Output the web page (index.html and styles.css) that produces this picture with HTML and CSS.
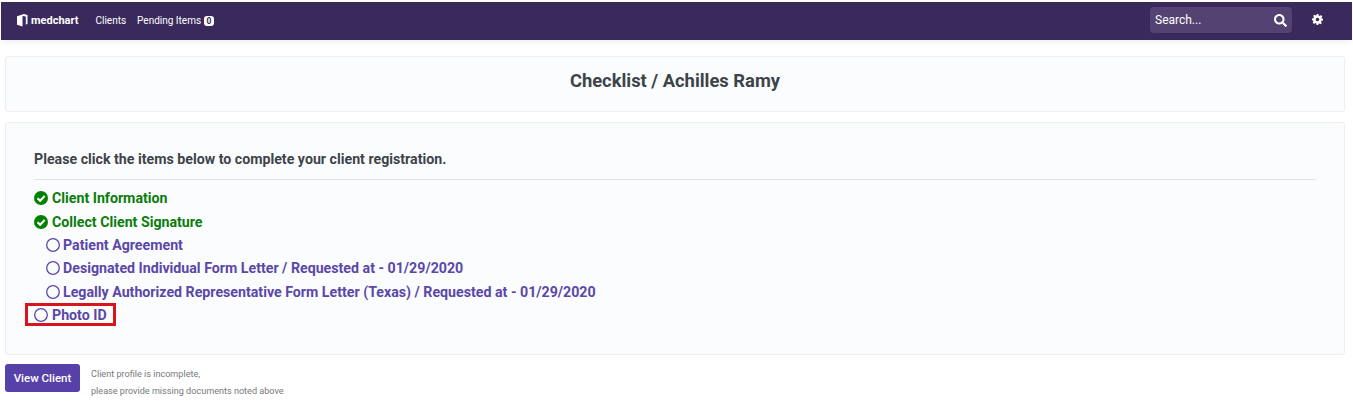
FILE: index.html
```html
<!DOCTYPE html>
<html>
  <head>
    <link rel="stylesheet" href="styles.css">
  </head>
  <body>
    <nav class="navbar">
      <a class="brand" href="#">
        <svg class="brand-icon" viewBox="0 0 12 14" width="12" height="14">
          <path d="M1 3.200 8 1 11.500 2 V11 L9.800 11.600 V3.400 L6.500 3 V13.500 L1 11.800 Z" fill="#fff"/>
        </svg>
        <span>medchart</span>
      </a>
      <a class="nav-link" href="#">Clients</a>
      <a class="nav-link" href="#">Pending Items <span class="badge">0</span></a>
      <div class="search">
        <span>Search...</span>
        <svg viewBox="0 0 512 512" width="13" height="13">
          <path fill="#fff" d="M505 442.700L405.300 343c-4.500-4.500-10.600-7-17-7H372c27.600-35.300 44-79.700 44-128C416 93.100 322.900 0 208 0S0 93.100 0 208s93.100 208 208 208c48.300 0 92.700-16.400 128-44v16.300c0 6.400 2.500 12.500 7 17l99.700 99.700c9.400 9.400 24.600 9.400 33.900 0l28.300-28.300c9.400-9.400 9.400-24.600.1-34zM208 336c-70.700 0-128-57.200-128-128 0-70.700 57.200-128 128-128 70.700 0 128 57.200 128 128 0 70.700-57.200 128-128 128z"/>
        </svg>
      </div>
      <svg class="gear" viewBox="0 0 24 24" width="11" height="11">
        <path fill="#fff" fill-rule="evenodd" d="M10 0h4l.6 3.300 2.300 1 2.800-1.900 2.900 2.900-1.900 2.800 1 2.300L24 10v4l-3.300.6-1 2.300 1.900 2.800-2.900 2.900-2.800-1.900-2.300 1L14 24h-4l-.6-3.300-2.300-1-2.800 1.900-2.900-2.900 1.900-2.800-1-2.300L0 14v-4l3.300-.6 1-2.300-1.900-2.800 2.900-2.900 2.800 1.900 2.300-1zM12 8a4 4 0 1 0 0 8 4 4 0 0 0 0-8z"/>
      </svg>
    </nav>

    <div class="card title-card">
      <h2>Checklist / Achilles Ramy</h2>
    </div>

    <div class="card list-card">
      <p class="intro">Please click the items below to complete your client registration.</p>
      <ul class="checklist">
        <li class="done">
          <svg viewBox="0 0 16 16" width="14" height="14"><circle cx="8" cy="8" r="8" fill="#008000"/><path d="M4 8.300 7 11.200 12.200 5.800" fill="none" stroke="#fff" stroke-width="2.400"/></svg>
          Client Information
        </li>
        <li class="done">
          <svg viewBox="0 0 16 16" width="14" height="14"><circle cx="8" cy="8" r="8" fill="#008000"/><path d="M4 8.300 7 11.200 12.200 5.800" fill="none" stroke="#fff" stroke-width="2.400"/></svg>
          Collect Client Signature
        </li>
        <li class="todo sub">
          <svg viewBox="0 0 14 14" width="14" height="14"><circle cx="7" cy="7" r="6.300" fill="none" stroke="#5a47a8" stroke-width="1.300"/></svg>
          Patient Agreement
        </li>
        <li class="todo sub">
          <svg viewBox="0 0 14 14" width="14" height="14"><circle cx="7" cy="7" r="6.300" fill="none" stroke="#5a47a8" stroke-width="1.300"/></svg>
          Designated Individual Form Letter / Requested at - 01/29/2020
        </li>
        <li class="todo sub">
          <svg viewBox="0 0 14 14" width="14" height="14"><circle cx="7" cy="7" r="6.300" fill="none" stroke="#5a47a8" stroke-width="1.300"/></svg>
          Legally Authorized Representative Form Letter (Texas) / Requested at - 01/29/2020
        </li>
        <li class="todo">
          <span class="highlight"></span>
          <svg viewBox="0 0 14 14" width="14" height="14"><circle cx="7" cy="7" r="6.300" fill="none" stroke="#5a47a8" stroke-width="1.300"/></svg>
          Photo ID
        </li>
      </ul>
    </div>

    <div class="footer-row">
      <a class="btn" href="#">View Client</a>
      <div class="hint">
        <div>Client profile is incomplete,</div>
        <div>please provide missing documents noted above</div>
      </div>
    </div>
  </body>
</html>
```

FILE: styles.css
```css
body {
  font-family: Roboto, "Liberation Sans", sans-serif;
  margin: 0;
  padding: 0;
  background-color: #fff;
  color: #3d4449;
  overflow: hidden;
}

.navbar {
  display: flex;
  align-items: center;
  height: 38px;
  box-sizing: border-box;
  margin: 2px 1px 0;
  padding: 0 29px 2px 15px;
  background-color: #3a2a5c;
  box-shadow: 0 2px 6px rgba(0, 0, 0, 0.06);
}

.navbar a {
  color: #fff;
  text-decoration: none;
}

.brand {
  display: flex;
  align-items: center;
  gap: 3px;
  font-size: 11px;
  font-weight: 700;
  margin-right: 17px;
}

.nav-link {
  font-size: 10px;
  margin-right: 11px;
}

.badge {
  display: inline-block;
  background-color: #fff;
  color: #3a2a5c;
  border-radius: 3px;
  padding: 0 3px;
  font-size: 8.500px;
  font-weight: 700;
  line-height: 10px;
}

.search {
  display: flex;
  align-items: center;
  justify-content: space-between;
  width: 142px;
  height: 26px;
  box-sizing: border-box;
  padding: 0 5px;
  margin-left: auto;
  margin-right: 20px;
  background-color: #544272;
  border-radius: 4px;
  color: #fff;
  font-size: 12px;
}

.gear {
  margin-bottom: 1px;
}

.card {
  background-color: #fbfcfe;
  border: 1px solid #eeeef0;
  border-radius: 3px;
  margin: 0 8px 0 5px;
  box-sizing: border-box;
}

.title-card {
  margin-top: 16px;
  height: 56px;
  padding-bottom: 8px;
  display: flex;
  align-items: center;
  justify-content: center;
}

.title-card h2 {
  margin: 0;
  font-size: 18.350px;
  font-weight: 700;
}

.list-card {
  margin-top: 10px;
  height: 233px;
  padding: 28px 28px 0;
}

.intro {
  margin: 0;
  padding-bottom: 11px;
  border-bottom: 1px solid #e3e3e6;
  font-size: 14.200px;
  font-weight: 700;
  line-height: 17px;
}

.checklist {
  list-style-type: none;
  margin: 6.500px 0 0;
  padding: 0;
}

.checklist li {
  position: relative;
  display: flex;
  align-items: center;
  gap: 4px;
  height: 23.400px;
  font-size: 14.200px;
  font-weight: 700;
}

.checklist li.sub {
  padding-left: 12px;
  gap: 3px;
}

.done {
  color: #0a7d0a;
}

.todo {
  color: #5a47a8;
}

.highlight {
  position: absolute;
  left: -9px;
  top: 0;
  width: 91px;
  height: 23px;
  border: 3px solid #d9141e;
  box-sizing: border-box;
}

.footer-row {
  display: flex;
  align-items: flex-start;
  margin: 9px 0 0 5px;
}

.btn {
  display: block;
  width: 75px;
  height: 28px;
  line-height: 28px;
  text-align: center;
  background-color: #5641a8;
  color: #fff;
  border-radius: 3px;
  font-size: 11.500px;
  font-weight: 500;
  text-decoration: none;
}

.hint {
  margin: 2px 0 0 11px;
  font-size: 9.100px;
  line-height: 17px;
  color: #77797c;
}
```
